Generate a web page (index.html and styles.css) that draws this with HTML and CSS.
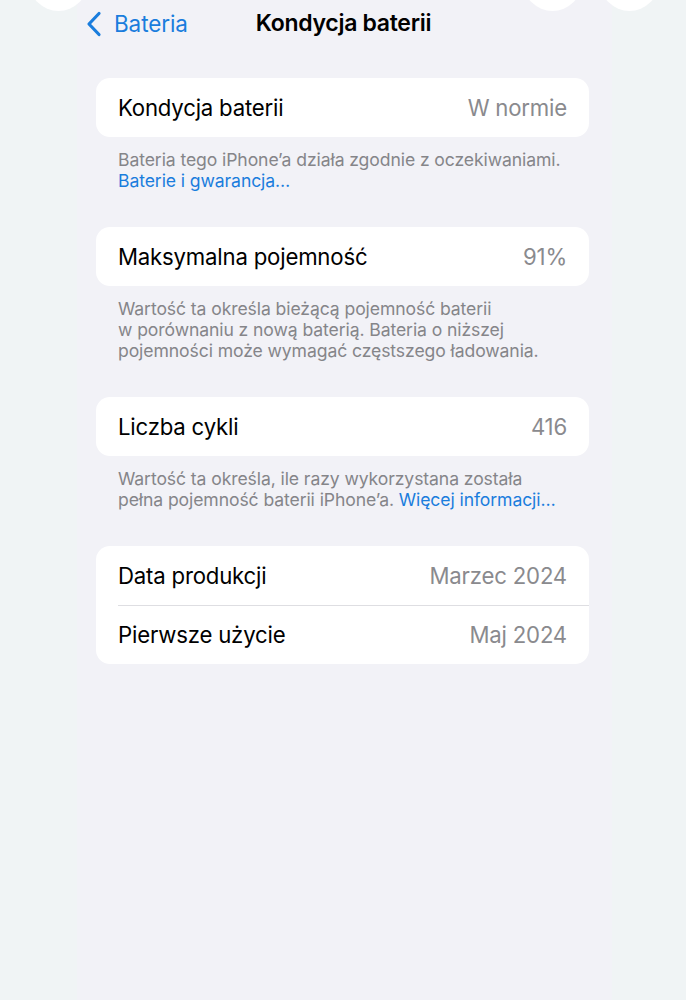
FILE: index.html
```html
<!DOCTYPE html>
<html lang="pl">
<head>
    <meta charset="UTF-8">
    <meta name="viewport" content="width=device-width, initial-scale=1.0">
    <title>Kondycja baterii</title>
    <link rel="stylesheet" href="styles.css">
</head>
<body>
    <div class="bubbles">
        <span class="bubble b-left"></span>
        <span class="bubble b-right1"></span>
        <span class="bubble b-right2"></span>
    </div>

    <div class="screen">
        <div class="nav">
            <a class="back" href="#">
                <svg width="16" height="26" viewBox="0 0 16 26">
                    <path d="M13 2.5 L3 13 L13 23.5" fill="none" stroke="currentColor" stroke-width="3.2" stroke-linecap="round" stroke-linejoin="round"/>
                </svg>
                <span>Bateria</span>
            </a>
            <h1 class="title">Kondycja baterii</h1>
        </div>

        <div class="group">
            <div class="row">
                <span class="label">Kondycja baterii</span>
                <span class="value">W normie</span>
            </div>
        </div>
        <p class="footer">
            Bateria tego iPhone’a działa zgodnie z oczekiwaniami.<br>
            <a href="#">Baterie i gwarancja…</a>
        </p>

        <div class="group">
            <div class="row">
                <span class="label">Maksymalna pojemność</span>
                <span class="value">91%</span>
            </div>
        </div>
        <p class="footer">
            Wartość ta określa bieżącą pojemność baterii<br>
            w porównaniu z nową baterią. Bateria o niższej<br>
            pojemności może wymagać częstszego ładowania.
        </p>

        <div class="group">
            <div class="row">
                <span class="label">Liczba cykli</span>
                <span class="value">416</span>
            </div>
        </div>
        <p class="footer">
            Wartość ta określa, ile razy wykorzystana została<br>
            pełna pojemność baterii iPhone’a. <a href="#">Więcej informacji…</a>
        </p>

        <div class="group">
            <div class="row">
                <span class="label">Data produkcji</span>
                <span class="value">Marzec 2024</span>
            </div>
            <div class="row">
                <span class="label">Pierwsze użycie</span>
                <span class="value">Maj 2024</span>
            </div>
        </div>
    </div>
</body>
</html>
```

FILE: styles.css
```css
:root {
    --blue: #1a7ddd;
    --grey: #8a8a8e;
    --note: #858589;
    --bg: #f2f2f7;
    --side: #f0f4f5;
}

* {
    box-sizing: border-box;
}

body {
    margin: 0;
    height: 1000px;
    overflow: hidden;
    background-color: var(--side);
    font-family: Inter, "Noto Sans", sans-serif;
    color: #000;
}

.screen {
    position: relative;
    margin-left: 77px;
    width: 535px;
    height: 1000px;
    background-color: var(--bg);
    padding: 0 23px 0 19px;
}

/* white circles peeking over the top edge */
.bubbles {
    position: absolute;
    top: 0;
    left: 0;
    width: 100%;
    z-index: 5;
}

.bubble {
    position: absolute;
    width: 59px;
    height: 59px;
    top: -48px;
    border-radius: 50%;
    background-color: #fff;
}

.b-left { left: 29px; }
.b-right1 { left: 523px; }
.b-right2 { left: 600px; }

.nav {
    position: relative;
    height: 48px;
    display: flex;
    align-items: center;
    justify-content: center;
}

.back {
    position: absolute;
    left: -10px;
    top: 10px;
    display: flex;
    align-items: center;
    gap: 12px;
    color: var(--blue);
    text-decoration: none;
    font-size: 22.5px;
    letter-spacing: -0.1px;
}

.title {
    margin: 0;
    position: relative;
    top: -1px;
    left: 1px;
    font-size: 23px;
    font-weight: 600;
    letter-spacing: -0.3px;
}

.group {
    margin-top: 30px;
    background-color: #fff;
    border-radius: 14px;
    overflow: hidden;
}

.row {
    height: 59px;
    display: flex;
    align-items: center;
    justify-content: space-between;
    padding: 0 22px;
    font-size: 22.2px;
    letter-spacing: -0.2px;
    position: relative;
}

.row + .row::before {
    content: "";
    position: absolute;
    top: 0;
    left: 22px;
    right: 0;
    border-top: 1px solid #dedee2;
}

.value {
    color: var(--grey);
}

.footer {
    margin: 0;
    padding: 12px 22px 0;
    font-size: 17.6px;
    line-height: 21px;
    color: var(--note);
    letter-spacing: -0.1px;
}

.footer + .group {
    margin-top: 36px;
}

.footer a {
    color: var(--blue);
    text-decoration: none;
}
```
